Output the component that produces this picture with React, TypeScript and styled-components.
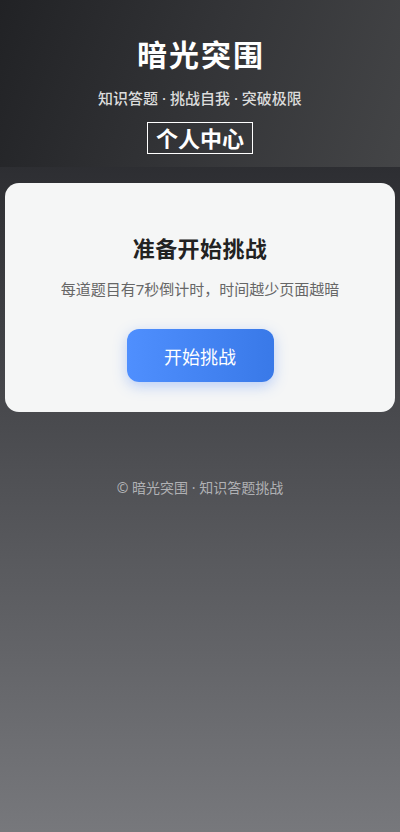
import styled, { createGlobalStyle } from "styled-components";

const GlobalStyle = createGlobalStyle`
  * {
    box-sizing: border-box;
  }
  body {
    margin: 0;
    font-family: "Noto Sans", "Noto Sans CJK SC", sans-serif;
    background: #2e2f33;
  }
`;

const Page = styled.div`
  min-height: 832px;
  display: flex;
  flex-direction: column;
  background: linear-gradient(180deg, #2b2c30 0%, #2d2e32 20%, #77787c 100%);
`;

const Header = styled.header`
  height: 167px;
  padding-top: 36px;
  display: flex;
  flex-direction: column;
  align-items: center;
  background: linear-gradient(110deg, #212225 0%, #333437 50%, #444547 100%);
`;

const Title = styled.h1`
  margin: 0;
  font-size: 30px;
  line-height: 38px;
  font-weight: 700;
  color: #ffffff;
  letter-spacing: 2px;
  padding-left: 2px;
`;

const Slogan = styled.p`
  margin: 14px 0 0;
  font-size: 15px;
  line-height: 20px;
  font-weight: 500;
  color: #dcdcdc;
`;

const ProfileButton = styled.button`
  margin-top: 14px;
  height: 32px;
  padding: 0 8px;
  border: 1px solid #ffffff;
  background: transparent;
  color: #ffffff;
  font-family: inherit;
  font-size: 22px;
  line-height: 28px;
  font-weight: 700;
  cursor: pointer;
`;

const Card = styled.section`
  margin: 16px 5px 0;
  padding: 50px 20px 30px;
  border-radius: 14px;
  background: #f5f6f6;
  display: flex;
  flex-direction: column;
  align-items: center;
`;

const CardTitle = styled.h2`
  margin: 0;
  font-size: 22px;
  line-height: 30px;
  font-weight: 700;
  color: #222222;
  letter-spacing: 0.4px;
`;

const CardText = styled.p`
  margin: 16px 0 0;
  font-size: 15px;
  line-height: 20px;
  color: #666666;
`;

const StartButton = styled.button`
  margin-top: 30px;
  width: 147px;
  height: 53px;
  border: none;
  border-radius: 12px;
  background: linear-gradient(90deg, #4f8ffe 0%, #3979e8 100%);
  box-shadow: 0 4px 14px rgba(72, 130, 250, 0.35);
  color: #ffffff;
  font-family: inherit;
  font-size: 18px;
  cursor: pointer;
`;

const Footer = styled.footer`
  margin-top: 67px;
  text-align: center;
  font-size: 14px;
  line-height: 18px;
  color: #b0b1b4;
`;

export default function App() {
  return (
    <>
      <GlobalStyle />
      <Page>
        <Header>
          <Title>暗光突围</Title>
          <Slogan>知识答题 · 挑战自我 · 突破极限</Slogan>
          <ProfileButton>个人中心</ProfileButton>
        </Header>
        <Card>
          <CardTitle>准备开始挑战</CardTitle>
          <CardText>每道题目有7秒倒计时，时间越少页面越暗</CardText>
          <StartButton>开始挑战</StartButton>
        </Card>
        <Footer>© 暗光突围 · 知识答题挑战</Footer>
      </Page>
    </>
  );
}
